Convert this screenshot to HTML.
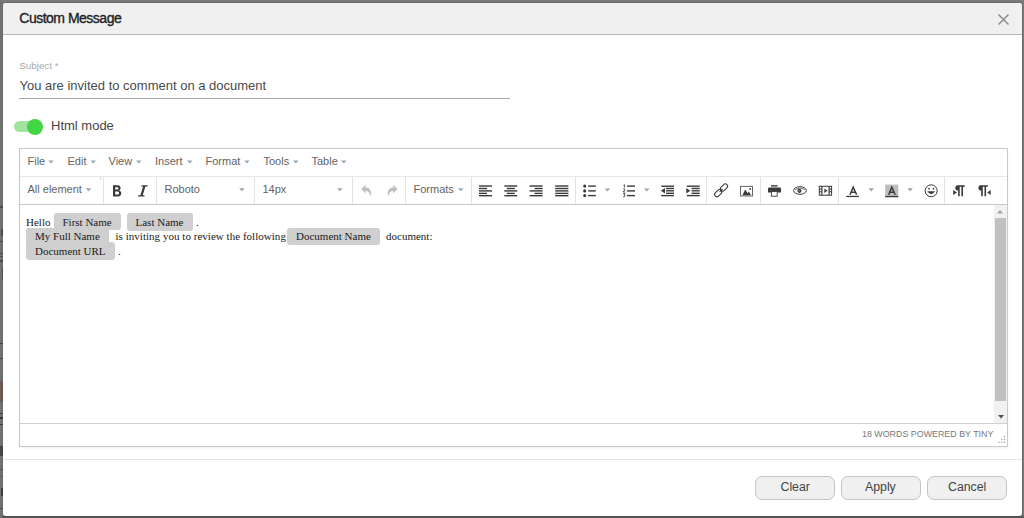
<!DOCTYPE html>
<html><head><meta charset="utf-8">
<style>
html,body{margin:0;padding:0;}
body{width:1024px;height:518px;overflow:hidden;background:#7a7a7a;position:relative;font-family:"Liberation Sans",sans-serif;}
.a{position:absolute;white-space:pre;line-height:1;}
#dlg{position:absolute;left:3px;top:3px;width:1019px;height:513px;background:#fff;border-radius:3px;overflow:hidden;box-shadow:0 0 1px 1px rgba(0,0,0,0.13);}
#hdr{position:absolute;left:0;top:0;width:1019px;height:31px;background:#f0f0f0;border-bottom:1px solid #b9b9b9;}
.menu{font-size:11px;color:#636363;top:155.5px;}
.car{position:absolute;width:0;height:0;border-left:2.8px solid transparent;border-right:2.8px solid transparent;border-top:3.2px solid #95a3b0;}
.sep{position:absolute;top:177px;width:1px;height:27px;background:#e3e3e3;}
.chip{position:absolute;background:#cfcfcf;border-radius:3px;}
.ct{font-family:"Liberation Serif",serif;font-size:11px;color:#1a1a1a;}
.btn{position:absolute;top:476px;width:78px;height:22px;border:1px solid #c4c4c4;border-radius:7px;background:#f0f0f0;}
.bt{font-size:12.3px;color:#444;top:481px;}
svg{position:absolute;overflow:visible;}
</style></head><body>

<div style="position:absolute;left:0;top:516px;width:1024px;height:2px;background:#5a5a5a;"></div>
<div style="position:absolute;left:0;top:0;width:2px;height:518px;background:#727272;"></div>
<div style="position:absolute;left:0px;top:206px;width:3px;height:2px;background:#333;opacity:0.6"></div>
<div style="position:absolute;left:1px;top:229px;width:2px;height:7px;background:#333;opacity:0.55"></div>
<div style="position:absolute;left:0px;top:241px;width:3px;height:1px;background:#333;opacity:0.6"></div>
<div style="position:absolute;left:0px;top:253px;width:3px;height:1px;background:#333;opacity:0.6"></div>
<div style="position:absolute;left:0px;top:256px;width:3px;height:1px;background:#333;opacity:0.5"></div>
<div style="position:absolute;left:0px;top:260px;width:3px;height:2px;background:#333;opacity:0.6"></div>
<div style="position:absolute;left:2px;top:268px;width:1px;height:12px;background:#333;opacity:0.5"></div>
<div style="position:absolute;left:0px;top:343px;width:3px;height:1px;background:#333;opacity:0.7"></div>
<div style="position:absolute;left:0px;top:358px;width:3px;height:1px;background:#333;opacity:0.7"></div>
<div style="position:absolute;left:0px;top:381px;width:3px;height:21px;background:#6b4a42;opacity:0.55"></div>
<div style="position:absolute;left:0px;top:413px;width:3px;height:1px;background:#222;opacity:0.6"></div>
<div style="position:absolute;left:0px;top:417px;width:3px;height:2px;background:#222;opacity:0.7"></div>
<div style="position:absolute;left:0px;top:424px;width:3px;height:1px;background:#222;opacity:0.6"></div>
<div style="position:absolute;left:0px;top:446px;width:3px;height:10px;background:#222;opacity:0.55"></div>
<div style="position:absolute;left:0px;top:469px;width:3px;height:1px;background:#333;opacity:0.5"></div>
<div style="position:absolute;left:0px;top:476px;width:3px;height:1px;background:#733;opacity:0.5"></div>
<div style="position:absolute;left:1px;top:488px;width:2px;height:8px;background:#222;opacity:0.6"></div>
<div style="position:absolute;left:0px;top:508px;width:3px;height:1px;background:#333;opacity:0.5"></div>
<div id="dlg"></div>
<div style="position:absolute;left:3px;top:3px;width:1019px;height:31px;background:#f0f0f0;border-radius:3px 3px 0 0;"></div>
<div style="position:absolute;left:3px;top:34px;width:1019px;height:1px;background:#b9b9b9;"></div>

<div class="a" style="left:19.3px;top:10.6px;font-size:14px;color:#222;letter-spacing:-0.5px;-webkit-text-stroke:0.35px #222;">Custom Message</div>
<svg style="left:998px;top:14.2px" width="11" height="11" viewBox="0 0 11 11"><path d="M0.5 0.5L10.5 10.5M10.5 0.5L0.5 10.5" stroke="#8c8c8c" stroke-width="1.5"/></svg>

<div class="a" style="left:19.3px;top:61px;font-size:9.8px;color:#a8a8a8;">Subject *</div>
<div class="a" style="left:19.5px;top:78.5px;font-size:13px;color:#4a4a4a;">You are invited to comment on a document</div>
<div style="position:absolute;left:19px;top:98px;width:491px;height:1px;background:#a6a6a6;"></div>

<div style="position:absolute;left:13.5px;top:121px;width:26px;height:11px;border-radius:6px;background:#9fe59f;"></div>
<div style="position:absolute;left:27px;top:118.5px;width:16px;height:16px;border-radius:50%;background:#42d642;"></div>
<div class="a" style="left:51px;top:119.3px;font-size:13px;color:#444;">Html mode</div>

<!-- editor -->
<div style="position:absolute;left:19px;top:148px;width:987px;height:297px;border:1px solid #c9c9c9;background:#fff;box-shadow:0 1px 2px rgba(0,0,0,0.07);"></div>
<div style="position:absolute;left:20px;top:176px;width:987px;height:1px;background:#e5e7ea;"></div>
<div style="position:absolute;left:20px;top:204px;width:987px;height:1px;background:#c8c8c8;"></div>
<div style="position:absolute;left:20px;top:423px;width:987px;height:1px;background:#d0d0d0;"></div>

<div class="a menu" style="left:27.5px;">File</div>
<div class="a menu" style="left:67.5px;">Edit</div>
<div class="a menu" style="left:108.5px;">View</div>
<div class="a menu" style="left:155px;">Insert</div>
<div class="a menu" style="left:205.5px;">Format</div>
<div class="a menu" style="left:263.5px;">Tools</div>
<div class="a menu" style="left:311.5px;">Table</div>

<!-- toolbar -->
<div class="a menu" style="left:27.5px;top:184px;">All element</div>
<div class="sep" style="left:103px"></div><div style="position:absolute;left:100px;top:177px;width:1px;height:3px;background:#d6d6d6"></div>
<div class="sep" style="left:156px"></div>
<div class="a menu" style="left:164.5px;top:184px;">Roboto</div>
<div class="sep" style="left:254px"></div>
<div class="a menu" style="left:262.5px;top:184px;">14px</div>
<div class="sep" style="left:352px"></div>
<div class="sep" style="left:405px"></div>
<div class="a menu" style="left:413.5px;top:184px;">Formats</div>
<div class="sep" style="left:471px"></div>
<div class="sep" style="left:575px"></div>


<div class="sep" style="left:706px"></div>
<div class="sep" style="left:760px"></div>
<div class="sep" style="left:838px"></div>


<div class="sep" style="left:944px"></div>


<!-- icons -->
<svg style="left:0;top:0" width="1024" height="518">
<g fill="#3a3a3a">
<path fill-rule="evenodd" d="M113 185.3H117.6C119.7 185.3 120.6 186.5 120.6 188C120.6 189.2 120 190 119.2 190.4C120.4 190.8 121.3 191.8 121.3 193.2C121.3 195.1 120 196.4 117.8 196.4H113ZM115.2 187.2V189.6H117.3C118 189.6 118.4 189.2 118.4 188.4C118.4 187.6 118 187.2 117.3 187.2ZM115.2 191.4V194.5H117.6C118.5 194.5 119 194 119 192.95C119 191.9 118.5 191.4 117.6 191.4Z"/>
<path d="M141.6 185.3H147.8L147.5 186.5H145.4L142.7 195.2H144.6L144.3 196.4H137.9L138.2 195.2H140.4L143.1 186.5H141.3Z"/>
</g>
<g fill="#bfbfbf">
<path d="M361.3 189.1L365.6 184.8V187.4C369.2 187.4 372.2 190 370.6 196.6C369.8 193 368.4 191 365.6 191V193.5Z"/>
<path d="M397.5 189.1L393.2 184.8V187.4C389.6 187.4 386.6 190 388.2 196.6C389 193 390.4 191 393.2 191V193.5Z"/>
</g>
<g fill="#3a3a3a">
<rect x="479" y="185.3" width="13" height="1.4"/><rect x="479" y="187.8" width="8" height="1.4"/><rect x="479" y="190.2" width="13" height="1.4"/><rect x="479" y="192.7" width="8" height="1.4"/><rect x="479" y="195" width="13" height="1.4"/>
<rect x="504.3" y="185.3" width="13" height="1.4"/><rect x="506.8" y="187.8" width="8" height="1.4"/><rect x="504.3" y="190.2" width="13" height="1.4"/><rect x="506.8" y="192.7" width="8" height="1.4"/><rect x="504.3" y="195" width="13" height="1.4"/>
<rect x="529.6" y="185.3" width="13" height="1.4"/><rect x="534.6" y="187.8" width="8" height="1.4"/><rect x="529.6" y="190.2" width="13" height="1.4"/><rect x="534.6" y="192.7" width="8" height="1.4"/><rect x="529.6" y="195" width="13" height="1.4"/>
<rect x="555.2" y="185.3" width="13.2" height="1.4"/><rect x="555.2" y="187.8" width="13.2" height="1.4"/><rect x="555.2" y="190.2" width="13.2" height="1.4"/><rect x="555.2" y="192.7" width="13.2" height="1.4"/><rect x="555.2" y="195" width="13.2" height="1.4"/>
<circle cx="584.7" cy="186.1" r="1.55"/><circle cx="584.7" cy="190.9" r="1.55"/><circle cx="584.7" cy="195.6" r="1.55"/>
<rect x="588.2" y="185.4" width="7.6" height="1.4"/><rect x="588.2" y="190.2" width="7.6" height="1.4"/><rect x="588.2" y="194.9" width="7.6" height="1.4"/>
<rect x="627" y="185.4" width="8" height="1.4"/><rect x="627" y="190.2" width="8" height="1.4"/><rect x="627" y="194.9" width="8" height="1.4"/>
<rect x="661.2" y="185.5" width="12.8" height="1.4"/><rect x="666" y="187.8" width="8" height="1.4"/><rect x="666" y="190.1" width="8" height="1.4"/><rect x="666" y="192.6" width="8" height="1.4"/><rect x="661.2" y="194.9" width="12.8" height="1.4"/>
<path d="M660.9 190.8L665 188V193.6Z"/>
<rect x="686.8" y="185.5" width="12.9" height="1.4"/><rect x="691.6" y="187.8" width="8.1" height="1.4"/><rect x="691.6" y="190.1" width="8.1" height="1.4"/><rect x="691.6" y="192.6" width="8.1" height="1.4"/><rect x="686.8" y="194.9" width="12.9" height="1.4"/>
<path d="M690.3 190.8L686.3 188V193.6Z"/>
</g>
<g fill="none" stroke="#3a3a3a" stroke-width="0.9">
<path d="M623.6 185.2L624.4 184.7V187.6"/>
<path d="M623.2 189.3C623.6 188.6 625.2 188.7 624.9 189.8L623.2 192H625.3"/>
<path d="M623.2 193.6H625L624 194.9C625.6 195 625.4 197.2 623.2 196.6"/>
</g>
<g fill="none" stroke="#3a3a3a" stroke-width="1.05">
<rect x="714.1" y="190.9" width="8.2" height="4.6" rx="2.3" transform="rotate(-45 718.2 193.2)"/>
<rect x="719.9" y="185.2" width="8.2" height="4.6" rx="2.3" transform="rotate(-45 724 187.5)"/>
<path d="M719.6 191.8L722.6 188.8"/>
</g>
<rect x="740.5" y="186.4" width="12" height="9.6" fill="none" stroke="#666" stroke-width="1"/>
<path d="M742.4 195.2L745.2 189.6L747.6 193.3L748.9 191.6L751 195.2Z" fill="#3a3a3a"/>
<circle cx="750.2" cy="188.9" r="0.95" fill="#3a3a3a"/>
<g fill="#3a3a3a">
<rect x="771" y="185.2" width="6.5" height="1.4"/>
<path d="M768 188.6Q768 187.6 769 187.6H780Q781 187.6 781 188.6V192.4H768Z"/>
</g>
<rect x="771.4" y="191.6" width="5.8" height="4.6" fill="#fff" stroke="#3a3a3a" stroke-width="0.9"/>
<ellipse cx="800" cy="190.5" rx="6.4" ry="3.8" fill="none" stroke="#3a3a3a" stroke-width="1"/>
<path d="M795.2 189.4Q800 186.6 804.8 189.4" fill="none" stroke="#3a3a3a" stroke-width="0.7"/>
<circle cx="799.4" cy="190.8" r="2.1" fill="#3a3a3a"/>
<rect x="798.6" y="189.9" width="0.9" height="1.6" fill="#aaa"/>
<g>
<rect x="819.3" y="186.3" width="12.3" height="8.9" fill="none" stroke="#3a3a3a" stroke-width="1"/>
<rect x="821.3" y="186" width="1.2" height="9.4" fill="#3a3a3a"/>
<rect x="828.5" y="186" width="1.2" height="9.4" fill="#3a3a3a"/>
<rect x="819" y="188.6" width="3" height="1" fill="#3a3a3a"/><rect x="819" y="191.3" width="3" height="1" fill="#3a3a3a"/>
<rect x="829" y="188.6" width="3" height="1" fill="#3a3a3a"/><rect x="829" y="191.3" width="3" height="1" fill="#3a3a3a"/>
<path d="M824.3 188.4L827.6 190.7L824.3 193Z" fill="#3a3a3a"/>
</g>
<path d="M850 194.8L853.2 187.1L856.6 194.8M851.3 192.2H855.1" fill="none" stroke="#3a3a3a" stroke-width="1.5"/>
<rect x="846.2" y="195.8" width="12.7" height="1.3" fill="#3a3a3a"/>
<rect x="885.2" y="184.6" width="13.1" height="12.6" fill="#bdbdbd"/>
<path d="M888.6 194.8L891.8 187.1L895.2 194.8M889.9 192.2H893.7" fill="none" stroke="#3a3a3a" stroke-width="1.5"/>
<rect x="885.2" y="195.9" width="13.1" height="1.3" fill="#3a3a3a"/>
<circle cx="931.2" cy="190.8" r="6" fill="none" stroke="#3a3a3a" stroke-width="1"/>
<circle cx="929" cy="188.7" r="0.85" fill="#3a3a3a"/><circle cx="933.5" cy="188.7" r="0.85" fill="#3a3a3a"/>
<path d="M927.3 191.3Q931.2 197.2 935.1 191.3Z" fill="#3a3a3a"/>
<g fill="#3a3a3a">
<path d="M957.5 185.2H964.8V186.7H963V196.2H961.4V186.7H959.7V196.2H958.1V190.6C956.4 190.5 955.3 189.4 955.3 187.9C955.3 186.3 956.4 185.2 957.5 185.2Z"/>
<path d="M953.2 190L957 192.5L953.2 195Z"/>
<path d="M980.6 185.2H987.8V186.7H986.1V196.2H984.5V186.7H982.8V196.2H981.2V190.6C979.5 190.5 978.4 189.4 978.4 187.9C978.4 186.3 979.5 185.2 980.6 185.2Z"/>
<path d="M990.7 190L987.2 192.5L990.7 195Z"/>
</g>
</svg>

<svg style="left:0;top:0" width="1024" height="518"><g fill="#97a6b4"><path d="M48.3 160.5H53.8L51.05 163.6Z"/><path d="M90.5 160.5H96.0L93.25 163.6Z"/><path d="M136.0 160.5H141.5L138.75 163.6Z"/><path d="M187.0 160.5H192.5L189.75 163.6Z"/><path d="M244.2 160.5H249.7L246.95 163.6Z"/><path d="M293.0 160.5H298.5L295.75 163.6Z"/><path d="M341.0 160.5H346.5L343.75 163.6Z"/><path d="M85.8 188.3H91.3L88.55 191.4Z"/><path d="M239.1 188.2H244.6L241.85 191.3Z"/><path d="M337.1 188.2H342.6L339.85 191.3Z"/><path d="M458.0 188.2H463.5L460.75 191.3Z"/><path d="M604.7 188.5H610.2L607.45 191.6Z"/><path d="M644.0 188.5H649.5L646.75 191.6Z"/><path d="M868.5 188.3H874.0L871.25 191.4Z"/><path d="M907.4 188.3H912.9L910.15 191.4Z"/></g></svg>
<!-- content -->
<div class="chip" style="left:54px;top:213.3px;width:67px;height:17px;"></div>
<div class="chip" style="left:127px;top:213.3px;width:65.5px;height:17.5px;"></div>
<div class="chip" style="left:26.2px;top:227.5px;width:82.6px;height:17.5px;"></div>
<div class="chip" style="left:286.7px;top:227.6px;width:93px;height:17.6px;"></div>
<div class="chip" style="left:26.2px;top:242px;width:89px;height:17.7px;"></div>

<div class="a ct" style="left:26px;top:217px;">Hello</div>
<div class="a ct" style="left:62.5px;top:217px;">First Name</div>
<div class="a ct" style="left:135.5px;top:217px;">Last Name</div>
<div class="a ct" style="left:196px;top:217px;">.</div>
<div class="a ct" style="left:35px;top:231.2px;">My Full Name</div>
<div class="a ct" style="left:115.5px;top:231.2px;letter-spacing:0.03px;">is inviting you to review the following</div>
<div class="a ct" style="left:296px;top:231.2px;">Document Name</div>
<div class="a ct" style="left:386px;top:231.2px;">document:</div>
<div class="a ct" style="left:35px;top:245.8px;">Document URL</div>
<div class="a ct" style="left:118px;top:245.8px;">.</div>

<!-- scrollbar -->
<div style="position:absolute;left:994px;top:205px;width:13px;height:218px;background:#f1f1f1;"></div>
<div style="position:absolute;left:995px;top:218px;width:11px;height:183px;background:#c1c1c1;"></div>
<svg style="left:997.3px;top:210px" width="6" height="3.5"><path d="M0 3.5L3 0L6 3.5Z" fill="#a3a3a3"/></svg>
<svg style="left:997.5px;top:414.5px" width="6" height="3.5"><path d="M0 0L3 3.5L6 0Z" fill="#505050"/></svg>

<!-- status -->
<div class="a" style="left:862px;top:429.8px;font-size:8.9px;color:#777;">18 WORDS POWERED BY TINY</div>


<svg style="left:0;top:0" width="1024" height="518"><g fill="#8a8a8a">
<rect x="1004" y="436" width="1.1" height="1.1"/>
<rect x="1001.2" y="438.8" width="1.1" height="1.1"/><rect x="1004" y="438.8" width="1.1" height="1.1"/>
<rect x="998.4" y="441.7" width="1.1" height="1.1"/><rect x="1001.2" y="441.7" width="1.1" height="1.1"/><rect x="1004" y="441.7" width="1.1" height="1.1"/>
</g></svg>
<!-- footer -->
<div style="position:absolute;left:3px;top:459px;width:1019px;height:1px;background:#e6e6e6;"></div>
<div class="btn" style="left:755px"></div>
<div class="btn" style="left:841px"></div>
<div class="btn" style="left:927px"></div>
<div class="a bt" style="left:780.5px">Clear</div>
<div class="a bt" style="left:865px">Apply</div>
<div class="a bt" style="left:948px">Cancel</div>
</body></html>
